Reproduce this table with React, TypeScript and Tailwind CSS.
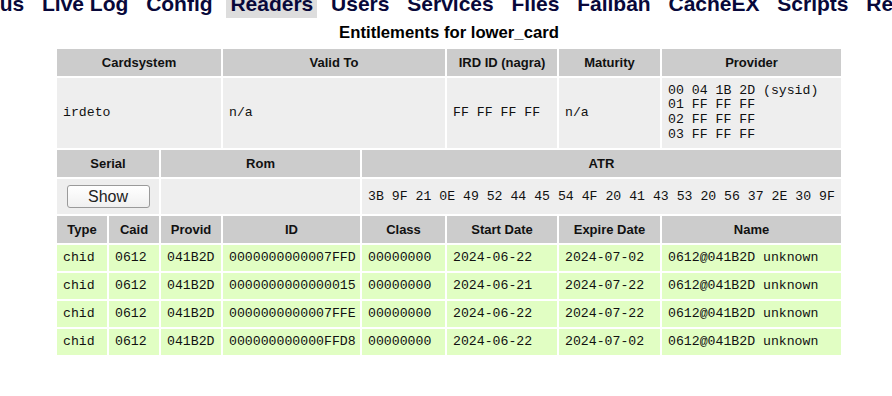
import React from 'react';

const menu = ['Status', 'Live Log', 'Config', 'Readers', 'Users', 'Services', 'Files', 'Failban', 'CacheEX', 'Scripts', 'Restart'];

const entitlements = [
  { type: 'chid', caid: '0612', provid: '041B2D', id: '0000000000007FFD', cls: '00000000', start: '2024-06-22', expire: '2024-07-02', name: '0612@041B2D unknown' },
  { type: 'chid', caid: '0612', provid: '041B2D', id: '0000000000000015', cls: '00000000', start: '2024-06-21', expire: '2024-07-22', name: '0612@041B2D unknown' },
  { type: 'chid', caid: '0612', provid: '041B2D', id: '0000000000007FFE', cls: '00000000', start: '2024-06-22', expire: '2024-07-22', name: '0612@041B2D unknown' },
  { type: 'chid', caid: '0612', provid: '041B2D', id: '000000000000FFD8', cls: '00000000', start: '2024-06-22', expire: '2024-07-02', name: '0612@041B2D unknown' },
];

const th = 'h-[27px] bg-[#cccccc] flex items-center justify-center font-bold text-[13px] text-[#111]';
const td = 'bg-[#eeeeee] flex items-center pl-[6px] font-["Liberation_Mono",monospace] text-[13.2px] text-[#111] whitespace-pre';
const tg = 'h-[26px] bg-[#e1fec3] flex items-center pl-[6px] font-["Liberation_Mono",monospace] text-[13.2px] text-[#111] whitespace-pre';

export default function App() {
  return (
    <div className="min-h-screen bg-white overflow-hidden font-['Liberation_Sans',Arial,sans-serif]">
      <div className="mt-[-10px] flex whitespace-nowrap ml-[-44px] gap-[9.8px]">
        {menu.map(item => (
          <span
            key={item}
            className={`shrink-0 px-[4px] py-[2px] text-[21px] leading-[23.5px] font-bold text-[#08083a] ${item === 'Readers' ? 'bg-[#dddddd]' : ''}`}
          >
            {item}
          </span>
        ))}
      </div>

      <div className="ml-[57px] w-[784px]">
        <h1 className="mt-[5.5px] text-center text-[16.7px] leading-[19px] font-bold text-black">
          Entitlements for lower_card
        </h1>

        <div className="mt-[7px] grid grid-cols-[50px_50px_60px_137px_83px_110px_101px_179px] gap-[2px]">
          <div className={`${th} col-span-3`}>Cardsystem</div>
          <div className={`${th} col-span-2`}>Valid To</div>
          <div className={th}>IRD ID (nagra)</div>
          <div className={th}>Maturity</div>
          <div className={th}>Provider</div>

          <div className={`${td} h-[70px] col-span-3`}>irdeto</div>
          <div className={`${td} h-[70px] col-span-2`}>n/a</div>
          <div className={`${td} h-[70px]`}>FF FF FF FF</div>
          <div className={`${td} h-[70px]`}>n/a</div>
          <div className={`${td} h-[70px] leading-[14.7px]`}>
            {'00 04 1B 2D (sysid)\n01 FF FF FF\n02 FF FF FF\n03 FF FF FF'}
          </div>

          <div className={`${th} col-span-2`}>Serial</div>
          <div className={`${th} col-span-2`}>Rom</div>
          <div className={`${th} col-span-4`}>ATR</div>

          <div className="h-[35px] col-span-2 bg-[#eeeeee] flex items-center justify-center">
            <button className="w-[83px] h-[23px] rounded-[3px] border border-[#9a9a9a] bg-gradient-to-b from-white to-[#f0f0f0] text-[16px] leading-none text-[#222]">
              Show
            </button>
          </div>
          <div className={`${td} h-[35px] col-span-2`}></div>
          <div className={`${td} h-[35px] col-span-4`}>3B 9F 21 0E 49 52 44 45 54 4F 20 41 43 53 20 56 37 2E 30 9F</div>

          <div className={th}>Type</div>
          <div className={th}>Caid</div>
          <div className={th}>Provid</div>
          <div className={th}>ID</div>
          <div className={th}>Class</div>
          <div className={th}>Start Date</div>
          <div className={th}>Expire Date</div>
          <div className={th}>Name</div>

          {entitlements.map((e, i) => (
            <React.Fragment key={i}>
              <div className={tg}>{e.type}</div>
              <div className={tg}>{e.caid}</div>
              <div className={tg}>{e.provid}</div>
              <div className={tg}>{e.id}</div>
              <div className={tg}>{e.cls}</div>
              <div className={tg}>{e.start}</div>
              <div className={tg}>{e.expire}</div>
              <div className={tg}>{e.name}</div>
            </React.Fragment>
          ))}
        </div>
      </div>
    </div>
  );
}
